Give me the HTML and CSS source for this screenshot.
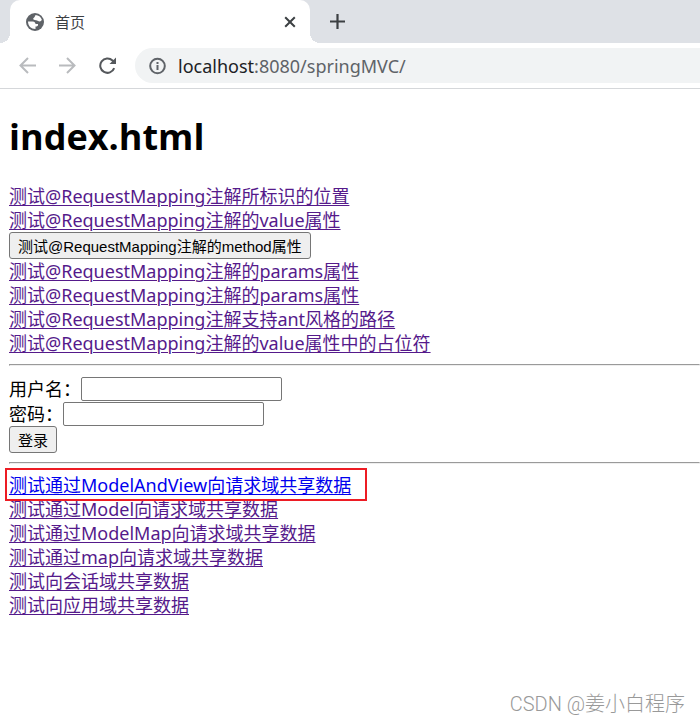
FILE: index.html
```
<!DOCTYPE html>
<html lang="zh">
<head>
    <meta charset="UTF-8">
    <meta name="viewport" content="width=device-width, initial-scale=1.0">
    <title>首页</title>
    <link rel="stylesheet" href="styles.css">
</head>
<body>
    <header>
        <div class="tab-strip">
            <div class="tab">
                <svg class="favicon" width="18" height="18" viewBox="0 0 18 18" aria-hidden="true">
                    <circle cx="9" cy="9" r="9" fill="#5f6368"/>
                    <path d="M9.500 2C12.500 2.200 14.800 3.800 15.800 6.500C15.500 8.500 13.500 9 12 8C11 6.800 9 7.500 7.500 6.500C6.500 5 9 4.500 9.500 2Z" fill="#fff"/>
                    <path d="M2 8.500L6.500 8.500C9 8.500 9.500 10 9.500 11L12 11C12.500 13 11 13.500 9.500 13.500L9.500 16C5 16 2 13 2 8.500Z" fill="#fff"/>
                </svg>
                <span class="tab-title">首页</span>
                <button class="icon-button" aria-label="关闭">
                    <svg width="12" height="12" viewBox="0 0 12 12" stroke="#3c4043" stroke-width="2"><path d="M1.200 1.200L10.800 10.800M10.800 1.200L1.200 10.800"/></svg>
                </button>
            </div>
            <button class="icon-button new-tab" aria-label="新标签页">
                <svg width="15" height="15" viewBox="0 0 15 15" stroke="#3c4043" stroke-width="2.200"><path d="M7.500 0V15M0 7.500H15"/></svg>
            </button>
        </div>
        <nav class="toolbar">
            <button class="icon-button" aria-label="后退">
                <svg width="18" height="18" viewBox="0 0 18 18" fill="none" stroke="#b9bbbe" stroke-width="2"><path d="M17 8.500H2M9 1L1.500 8.500L9 16"/></svg>
            </button>
            <button class="icon-button" aria-label="前进">
                <svg width="18" height="18" viewBox="0 0 18 18" fill="none" stroke="#b9bbbe" stroke-width="2"><path d="M0 8.500H15M8 1L15.500 8.500L8 16"/></svg>
            </button>
            <button class="icon-button" aria-label="重新加载">
                <svg width="18" height="18" viewBox="0 0 18 18"><path d="M15.200 11.200A7.200 7.200 0 1 1 13.500 3.500L15 5" fill="none" stroke="#55585c" stroke-width="2"/><path d="M17 .5V7H10.500Z" fill="#55585c"/></svg>
            </button>
            <div class="address">
                <svg width="18" height="18" viewBox="0 0 18 18" fill="none" stroke="#5f6368" stroke-width="2"><circle cx="9.500" cy="9" r="7.300"/><path d="M9.500 8V13M9.500 5V7"/></svg>
                <span class="url"><span class="host">localhost</span>:8080/springMVC/</span>
            </div>
        </nav>
    </header>

    <main>
        <h1>index.html</h1>
        <a href="#">测试@RequestMapping注解所标识的位置</a><br>
        <a href="#">测试@RequestMapping注解的value属性</a><br>
        <form>
            <button class="submit" type="button">测试@RequestMapping注解的method属性</button>
        </form>
        <a href="#">测试@RequestMapping注解的params属性</a><br>
        <a href="#">测试@RequestMapping注解的params属性</a><br>
        <a href="#">测试@RequestMapping注解支持ant风格的路径</a><br>
        <a href="#">测试@RequestMapping注解的value属性中的占位符</a><br>
        <hr>
        <form class="login">
            <div class="field">
                <label for="username">用户名：</label><input type="text" id="username">
            </div>
            <div class="field">
                <label for="password">密码：</label><input type="password" id="password">
            </div>
            <button class="submit" type="button">登录</button>
        </form>
        <hr>
        <a class="unvisited marked" href="#">测试通过ModelAndView向请求域共享数据</a><br>
        <a href="#">测试通过Model向请求域共享数据</a><br>
        <a href="#">测试通过ModelMap向请求域共享数据</a><br>
        <a href="#">测试通过map向请求域共享数据</a><br>
        <a href="#">测试向会话域共享数据</a><br>
        <a href="#">测试向应用域共享数据</a><br>
    </main>

    <footer>CSDN @姜小白程序</footer>
</body>
</html>
```
FILE: styles.css
```
:root {
    --link: #0000ee;
    --visited: #551a8b;
    --mark: #ed1c24;
    --border: #767676;
}

* {
    box-sizing: border-box;
}

body {
    margin: 0;
    min-height: 100vh;
    display: flex;
    flex-direction: column;
    background: #fff;
    color: #000;
    font-family: "Noto Sans", "Noto Sans CJK SC", sans-serif;
    font-size: 18px;
    line-height: 24px;
    overflow-x: hidden;
}

.tab-strip {
    display: flex;
    align-items: center;
    height: 43px;
    padding-left: 10px;
    background: #dee1e6;
}

.tab {
    position: relative;
    display: flex;
    align-items: center;
    width: 300px;
    height: 43px;
    padding: 0 14px 0 16px;
    background: #fff;
    border-radius: 10px 10px 0 0;
}

/* curved feet of the active tab */
.tab::before,
.tab::after {
    content: "";
    position: absolute;
    bottom: 0;
    width: 10px;
    height: 10px;
}

.tab::before {
    right: 100%;
    background: radial-gradient(circle at 0 0, #dee1e6 10px, #fff 10px);
}

.tab::after {
    left: 100%;
    background: radial-gradient(circle at 100% 0, #dee1e6 10px, #fff 10px);
}

.tab-title {
    flex: 1;
    margin-left: 11px;
    font-size: 15px;
    color: #3c4043;
}

.icon-button {
    display: flex;
    padding: 0;
    border: none;
    background: none;
}

.new-tab {
    margin-left: 20px;
}

.toolbar {
    display: flex;
    align-items: center;
    gap: 22px;
    height: 46px;
    padding-left: 19px;
    border-bottom: 1px solid #d5d7da;
}

.address {
    flex: 1;
    display: flex;
    align-items: center;
    gap: 12px;
    height: 35px;
    margin-left: -4px;
    padding-left: 13px;
    border-radius: 18px 0 0 18px;
    background: #f1f3f4;
}

.url {
    font-family: "Noto Sans", sans-serif;
    font-size: 18px;
    color: #5f6368;
}

.host {
    color: #202124;
}

main {
    flex: 1;
    padding-left: 9px;
}

h1 {
    margin: 24px 0 23px;
    font-family: "Open Sans", sans-serif;
    font-size: 36px;
    line-height: 48px;
}

a {
    color: var(--visited);
    text-underline-offset: 2px;
    text-decoration-thickness: 1px;
}

.unvisited {
    color: var(--link);
}

.marked {
    padding: 1px 12px 0 0;
    outline: 2px solid var(--mark);
    outline-offset: 2px;
}

hr {
    margin: 9px 0;
    border: 1px inset #eee;
}

.submit {
    display: block;
    height: 27px;
    padding: 0 8px;
    border: 1px solid var(--border);
    border-radius: 3px;
    background: #efefef;
    color: #000;
    font-family: "Liberation Sans", "Noto Sans CJK SC", sans-serif;
    font-size: 15px;
}

.login {
    padding-top: 1px;
}

.field {
    display: flex;
    align-items: center;
    height: 25px;
}

.field input {
    width: 201px;
    height: 24px;
    padding: 1px 2px;
    border: 1px solid var(--border);
    border-radius: 2px;
    font-size: 15px;
}

footer {
    padding: 0 15px 8px;
    text-align: right;
    font-family: Roboto, "Noto Sans CJK SC", sans-serif;
    font-size: 20px;
    font-weight: 300;
    color: #999;
}
```
